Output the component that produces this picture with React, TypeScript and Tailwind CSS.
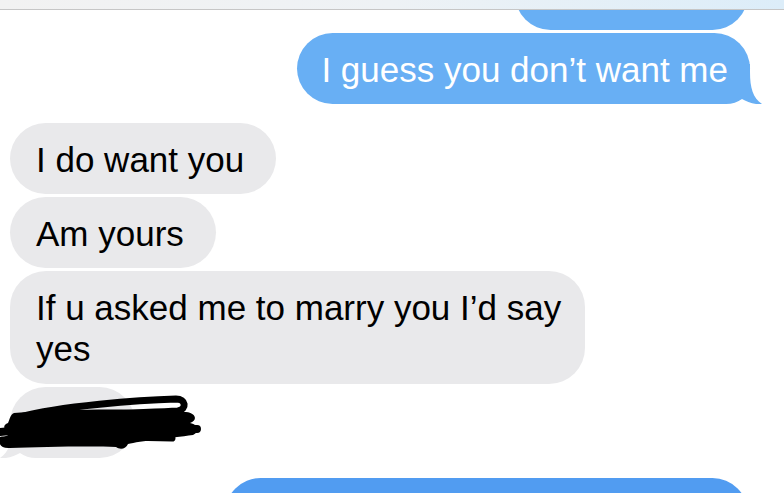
const font = { fontFamily: '"Liberation Sans", Arial, sans-serif' };

function OutTail({ color }: { color: string }) {
  // tail at the bottom-right of a sent bubble
  return (
    <svg className="absolute right-[-14px] bottom-0" width="54" height="40" viewBox="0 0 54 40">
      <path d="M0 40 L0 0 L40 0 L40 8 C40 24 43 34 52 40 C45 41 37 38 32 35 C28 38 22 40 16 40 Z" fill={color} />
    </svg>
  );
}

function InTail() {
  // mirrored tail at the bottom-left of a received bubble
  return (
    <svg className="absolute left-[-12px] bottom-0" width="54" height="40" viewBox="0 0 54 40">
      <path d="M54 40 L54 0 L14 0 L14 8 C14 24 11 34 2 40 C9 41 17 38 22 35 C26 38 32 40 38 40 Z" fill="#e9e9eb" />
    </svg>
  );
}

function Sent({ text, tail }: { text: string; tail?: boolean }) {
  return (
    <div className="relative self-end mr-[34px] bg-[#68aff4] text-white rounded-[36px] pl-[24px] pr-[22px] pt-[16px] pb-[14px] text-[35px] leading-[41px] whitespace-nowrap">
      <span className="relative z-10">{text}</span>
      {tail && <OutTail color="#68aff4" />}
    </div>
  );
}

function Received({ children, className = '' }: { children: React.ReactNode; className?: string }) {
  return (
    <div className={`self-start ml-[10px] bg-[#e9e9eb] text-black rounded-[36px] pl-[26px] pr-[32px] pt-[16px] pb-[14px] text-[35px] leading-[41px] ${className}`}>
      {children}
    </div>
  );
}

export default function App() {
  return (
    <div className="w-[784px] h-[493px] overflow-hidden bg-white flex flex-col" style={font}>
      <div className="relative z-20 h-[10px] shrink-0 bg-gradient-to-r from-[#f2f2f2] via-[#eef2f5] to-[#dcedf9] border-b border-[#c6c6c6]" />

      <div className="flex flex-col -mt-[51px]">
        {/* earlier sent message, mostly scrolled off */}
        <div className="self-end mr-[36px] w-[233px] h-[71px] bg-[#68aff4] rounded-[36px]" />

        <div className="mt-[3px] flex flex-col">
          <Sent text="I guess you don’t want me" tail />
        </div>

        <div className="mt-[19px] flex flex-col gap-[3px]">
          <Received className="whitespace-nowrap">I do want you</Received>
          <Received className="whitespace-nowrap">Am yours</Received>
          <Received className="w-[575px] !pr-[22px] !pb-[15px]">If u asked me to marry you I’d say yes</Received>

          {/* redacted message */}
          <div className="relative self-start ml-[10px] w-[125px] h-[71px] bg-[#e9e9eb] rounded-[36px]">
            <InTail />
            <svg className="absolute left-[-10px] top-0 z-10" width="215" height="71" viewBox="0 0 215 71">
              <path d="M20 30 C60 19 140 13 176 12 C186 12 187 22 178 24 C140 26 70 28 24 33" fill="none" stroke="#000" strokeWidth="7" strokeLinecap="round" />
              <path d="M14 26 C60 22 140 21 186 25 C196 26 198 33 190 36 C199 38 200 45 193 48 C170 51 140 54 128 57 C126 62 120 63 116 60 C90 59 40 60 10 61 C0 62 -3 55 2 51 C6 49 10 47 12 46 C3 44 2 38 8 36 C10 32 10 28 14 26 Z" fill="#000" />
              <path d="M0 45 C40 41 120 40 197 42" fill="none" stroke="#000" strokeWidth="8" strokeLinecap="round" />
              <path d="M2 53 C50 51 120 49 172 51" fill="none" stroke="#000" strokeWidth="7" strokeLinecap="round" />
            </svg>
          </div>
        </div>

        <div className="mt-[20px] self-end mr-[36px] w-[523px] h-[71px] bg-[#519cf1] rounded-[36px]" />
      </div>
    </div>
  );
}
